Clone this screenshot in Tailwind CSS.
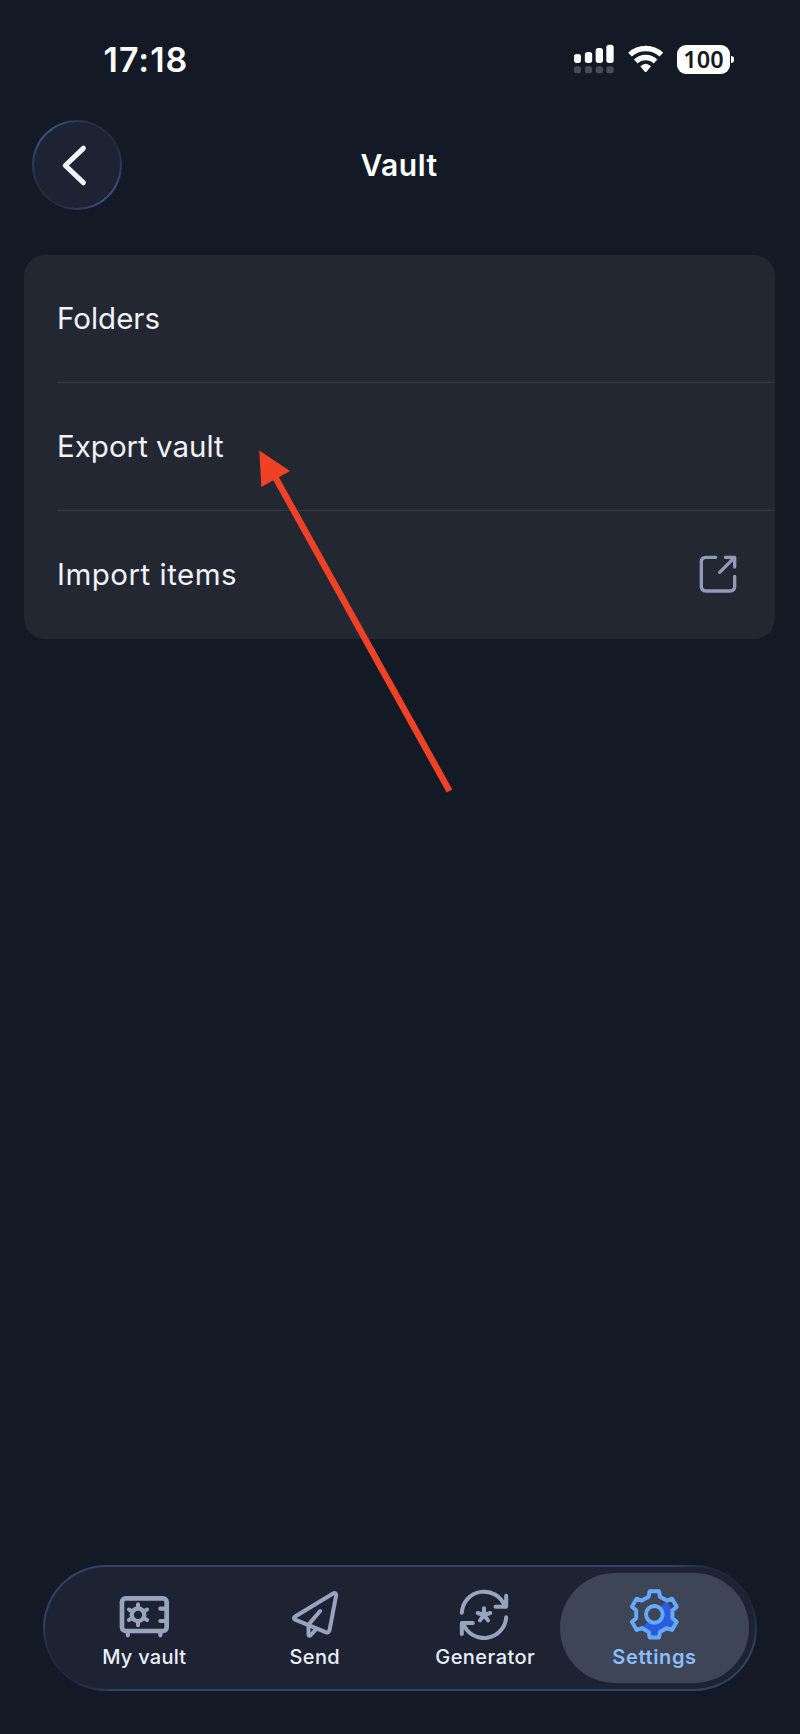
<!DOCTYPE html>
<html lang="en">
<head>
<meta charset="utf-8">
<title>Vault</title>
<script src="https://cdn.jsdelivr.net/npm/@tailwindcss/browser@4"></script>
</head>
<body class="bg-[#131a25]">
<div class="relative flex h-[1734px] w-[800px] flex-col overflow-hidden bg-[#131a25] font-['Inter',sans-serif] text-white">

  <!-- Status bar -->
  <div class="flex h-[120px] items-start justify-between pr-[66px] pl-[103.500px]">
    <div class="mt-[39px] text-[34px] leading-[42px] font-semibold tracking-[1px]">17:18</div>
    <div class="mt-[42px] flex">
      <svg class="h-[34px] w-[113px]" viewBox="36 36 339 102">
        <g fill="#fff">
          <rect x="42" y="72" width="21" height="27" rx="8"/>
          <rect x="74.500" y="66" width="22" height="33" rx="8"/>
          <rect x="107" y="54" width="22" height="45" rx="8"/>
          <rect x="139" y="44" width="22" height="55" rx="8"/>
        </g>
        <g fill="#464b55">
          <rect x="42" y="109" width="21" height="21" rx="8"/>
          <rect x="74.500" y="109" width="22" height="21" rx="8"/>
          <rect x="107" y="109" width="22" height="21" rx="8"/>
          <rect x="139" y="109" width="22" height="21" rx="8"/>
        </g>
        <path d="M210 74A69 69 0 0 1 304 74M227.500 94.500A42 42 0 0 1 286.500 94.500" fill="none" stroke="#fff" stroke-width="16"/>
        <path d="M241 109Q257 94 273 109L259.500 125Q257 127.500 254.500 125Z" fill="#fff"/>
      </svg>
      <div class="mt-[2.500px] -ml-[8px] flex h-[29.500px] items-center">
        <div class="flex h-[29.500px] w-[53px] items-center justify-center rounded-[9px] bg-white font-['Noto_Sans',sans-serif] text-[23.500px] leading-none font-semibold text-[#131a25]">100</div>
        <div class="ml-[1px] h-[7px] w-[3px] rounded-r-full bg-white"></div>
      </div>
    </div>
  </div>

  <!-- Header -->
  <header class="grid h-[90px] grid-cols-[90px_1fr_90px] items-center px-[32px]">
    <div class="h-[90px] w-[90px] rounded-full bg-[linear-gradient(45deg,#242c40_17%,#374f80_42%,#374f80_58%,#242c40_83%)] p-[2px]">
      <div class="flex h-full w-full items-center justify-center rounded-full bg-[#1d2332]">
        <svg class="h-[60px] w-[60px]" viewBox="141 345 180 180" fill="none" stroke="#eef3fd" stroke-width="15.500" stroke-linecap="round" stroke-linejoin="round"><path d="M250 385L196 436.500L250 488"/></svg>
      </div>
    </div>
    <h1 class="pr-[2px] text-center text-[30px] leading-[36px] font-semibold tracking-[0.500px]">Vault</h1>
  </header>

  <!-- Options -->
  <main class="mr-[25px] ml-[24px] mt-[44.500px] flex h-[384px] flex-col rounded-[21px] bg-[#232732] pl-[33px] text-[29.500px] text-[#f0f2f7]">
    <div class="flex h-[128px] items-center border-b border-[#373b46] pt-[1px]"><span>Folders</span></div>
    <div class="flex h-[128px] items-center border-b border-[#373b46] pt-[1px]"><span>Export vault</span></div>
    <div class="flex h-[128px] items-center justify-between pr-[37px]">
      <span class="tracking-[0.500px]">Import items</span>
      <svg class="mb-[2px] h-[40px] w-[40px]" viewBox="56 73 120 120" fill="none" stroke="#8f9bba" stroke-width="10" stroke-linecap="round" stroke-linejoin="round"><path d="M109 83H80Q66 83 66 97V170Q66 184 80 184H152Q166 184 166 170V140M138 83H166V112M165 84L121 128"/></svg>
    </div>
  </main>

  <!-- Tab bar -->
  <nav class="mx-[43px] mt-auto mb-[43px] h-[126px] rounded-full bg-[linear-gradient(45deg,#1f2738_26px,#2f4268_52px,#2f4268_535px,#1f2738_562px)] p-[2px]">
    <div class="flex h-full items-center rounded-full bg-[#1d2332] pl-[14px] text-[20px] leading-[24px] font-medium text-[#eaf0fb]">
      <div class="flex w-[170.500px] flex-col items-center gap-[5px]">
        <svg class="h-[52px] w-[52px]" viewBox="265 113 156 156" fill="none" stroke="#98a4be" stroke-linecap="round" stroke-linejoin="round">
          <rect x="277" y="144" width="134" height="98" rx="11" stroke-width="14"/>
          <path d="M294.500 246V255M392 246V255M392 175H408M392 212H408" stroke-width="12.500"/>
          <circle cx="325" cy="193.500" r="19" stroke-width="13"/>
          <path d="M325 171V162M325 216V225M344.500 182.200L352.300 177.700M305.500 204.800L297.700 209.300M344.500 204.800L352.300 209.300M305.500 182.200L297.700 177.700" stroke-width="12"/>
        </svg>
        <span class="tracking-[0.250px]">My vault</span>
      </div>
      <div class="flex w-[170.500px] flex-col items-center gap-[5px]">
        <svg class="h-[52px] w-[52px]" viewBox="117.500 113 156 156" fill="none" stroke="#98a4be" stroke-width="12" stroke-linecap="round" stroke-linejoin="round">
          <path d="M251 129L136 198.500Q129 204 136 208L229 246Q237 248 239 240L259 135Q259 126 251 129ZM211 182L181 217Q176 222 176 228V252Q177 260 183 254L200 236"/>
        </svg>
        <span class="tracking-[0.350px]">Send</span>
      </div>
      <div class="flex w-[170.500px] flex-col items-center gap-[5px]">
        <svg class="h-[52px] w-[52px]" viewBox="627.500 113 156 156" fill="none" stroke="#98a4be" stroke-width="12" stroke-linecap="round" stroke-linejoin="round">
          <path d="M636 187A66.500 66.500 0 0 1 765 168M769 136V169H737M769 201A66.500 66.500 0 0 1 640 219M636 251V218H669"/>
          <path d="M702.500 194V174M702.500 194L721.500 188M702.500 194L714.500 210M702.500 194L690.500 210M702.500 194L683.500 188"/>
        </svg>
        <span class="tracking-[0.450px]">Generator</span>
      </div>
      <div class="-ml-[10.500px] flex h-[110px] w-[189px] shrink-0 flex-col items-center justify-center gap-[5px] rounded-full bg-[#3d4556] text-[#8dbdff]">
        <svg class="h-[52px] w-[52px]" viewBox="-76 -79 156 156" stroke-linejoin="round">
          <path d="M37.400 -41.200L54.400 -11.800V11.800L67.200 22.600L53.200 46.900L37.400 41.200L17 53L14 69.500H-14L-17 53L-37.400 41.200Z" fill="#2a5cdd"/>
          <circle r="25" fill="#3d4556" stroke="#65a9fb" stroke-width="12"/>
          <path d="M-17 -53L-14 -69.500H14L17 -53L37.400 -41.200L53.200 -46.900L67.200 -22.600L54.400 -11.800V11.800L67.200 22.600L53.200 46.900L37.400 41.200L17 53L14 69.500H-14L-17 53L-37.400 41.200L-53.200 46.900L-67.200 22.600L-54.400 11.800V-11.800L-67.200 -22.600L-53.200 -46.900L-37.400 -41.200Z" fill="none" stroke="#65a9fb" stroke-width="12"/>
        </svg>
        <span class="font-semibold tracking-[0.650px]">Settings</span>
      </div>
    </div>
  </nav>

  <!-- Pointer arrow -->
  <svg class="pointer-events-none absolute top-[440px] left-[250px] h-[360px] w-[210px]" viewBox="250 440 210 360">
    <path d="M274 475L449.500 791" stroke="#ee4126" stroke-width="6.500"/>
    <path d="M259.300 450.500L290 471L261.300 487Z" fill="#ee4126"/>
  </svg>
</div>
</body>
</html>
